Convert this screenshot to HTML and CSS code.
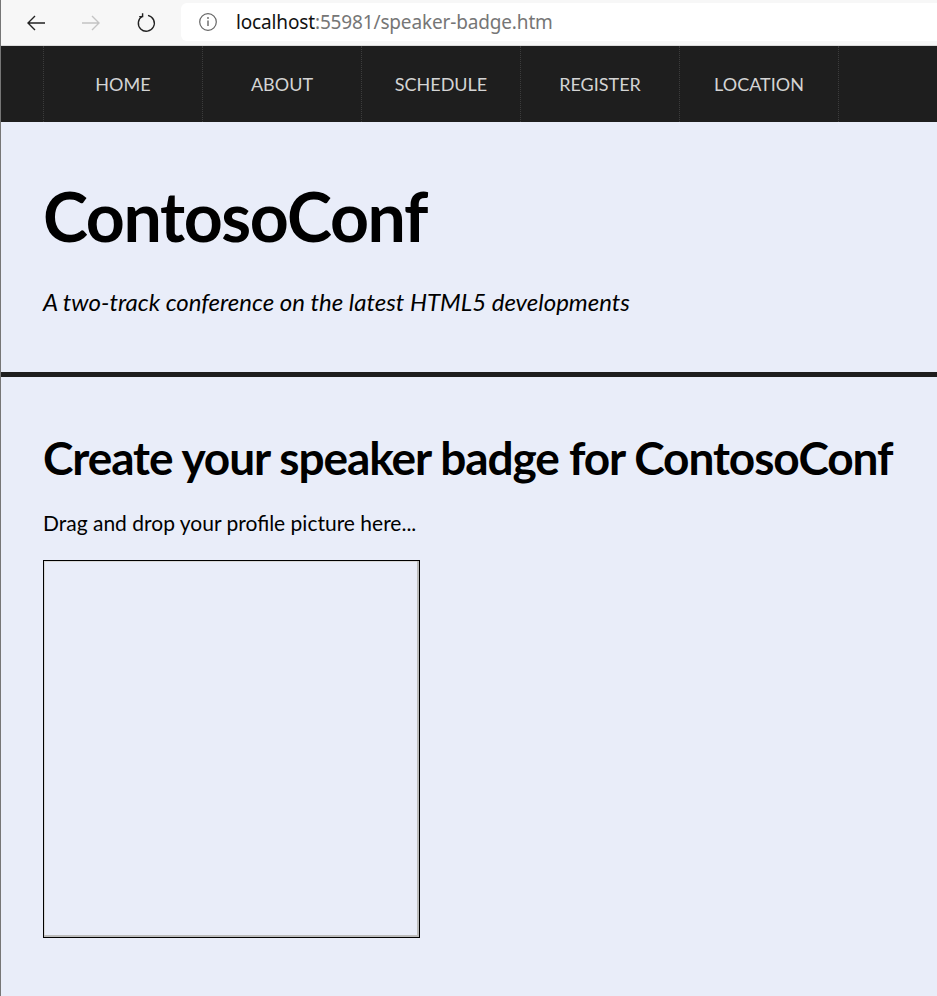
FILE: index.html
```html
<!DOCTYPE html>
<html lang="en">
<head>
<meta charset="utf-8">
<title>ContosoConf - Speaker Badge</title>
<link rel="stylesheet" href="styles.css">
</head>
<body>
<div class="window">
  <div class="chrome">
    <div class="chrome-btns">
      <span class="cbtn">
        <svg width="22" height="22" viewBox="0 0 22 22"><path d="M20 11H3M10 4l-7 7 7 7" fill="none" stroke="#222" stroke-width="1.4"/></svg>
      </span>
      <span class="cbtn">
        <svg width="22" height="22" viewBox="0 0 22 22"><path d="M2 11h17M12 4l7 7-7 7" fill="none" stroke="#c4c4c4" stroke-width="1.4"/></svg>
      </span>
      <span class="cbtn">
        <svg width="22" height="22" viewBox="0 0 22 22"><path d="M7.5 4.2A8 8 0 1 0 13 3.4" fill="none" stroke="#222" stroke-width="1.4"/><path d="M7.6 1.2v3.4H4.2" fill="none" stroke="#222" stroke-width="1.4"/></svg>
      </span>
    </div>
    <div class="address">
      <svg class="info" width="20" height="20" viewBox="0 0 20 20"><circle cx="10" cy="10" r="8.3" fill="none" stroke="#666" stroke-width="1.2"/><path d="M10 8.5v5.5" stroke="#666" stroke-width="1.4"/><circle cx="10" cy="6" r="0.9" fill="#666"/></svg>
      <span class="url"><span class="host">localhost</span>:55981/speaker-badge.htm</span>
    </div>
  </div>

  <nav class="topnav">
    <ul class="nav-list">
      <li class="nav-item"><a href="#">HOME</a></li>
      <li class="nav-item"><a href="#">ABOUT</a></li>
      <li class="nav-item"><a href="#">SCHEDULE</a></li>
      <li class="nav-item"><a href="#">REGISTER</a></li>
      <li class="nav-item"><a href="#">LOCATION</a></li>
    </ul>
  </nav>

  <header class="page-header">
    <h1 class="site-title">ContosoConf</h1>
    <p class="tagline">A two-track conference on the latest HTML5 developments</p>
  </header>

  <main class="content">
    <h2 class="section-title">Create your speaker badge for ContosoConf</h2>
    <p class="instructions">Drag and drop your profile picture here...</p>
    <div class="drop-zone"></div>
  </main>
</div>
</body>
</html>
```

FILE: styles.css
```css
html, body {
  margin: 0;
  padding: 0;
  height: 100%;
}

body {
  background: #e9edf9;
  font-family: Lato, "Open Sans", sans-serif;
  color: #000;
}

.window {
  min-height: 100%;
  border-left: 1px solid #767676;
  box-sizing: border-box;
  background: #e9edf9;
}

/* browser chrome */
.chrome {
  height: 46px;
  box-sizing: border-box;
  background: #f7f7f7;
  border-bottom: 1px solid #dcdcdc;
  display: flex;
  align-items: center;
}

.chrome-btns {
  display: flex;
  padding-left: 24px;
  gap: 33px;
  width: 156px;
  box-sizing: border-box;
}

.cbtn {
  width: 22px;
  height: 22px;
  display: flex;
}

.address {
  flex: 1;
  height: 38px;
  margin-top: -2px;
  background: #fff;
  border-radius: 6px 0 0 6px;
  display: flex;
  align-items: center;
  padding-left: 17px;
  margin-left: 24px;
}

.info {
  margin-right: 18px;
}

.url {
  font-family: "Noto Sans", "Open Sans", sans-serif;
  font-size: 19px;
  color: #767676;
  letter-spacing: -0.15px;
}

.host {
  color: #111;
}

/* nav */
.topnav {
  background: #1e1e1e;
  height: 76px;
}

.nav-list {
  list-style: none;
  margin: 0;
  padding: 0 0 0 42px;
  display: flex;
  height: 100%;
}

.nav-item {
  width: 159px;
  box-sizing: border-box;
  border-left: 1px dotted #3c3c3c;
  display: flex;
  align-items: center;
  justify-content: center;
}

.nav-item:last-child {
  width: 160px;
  border-right: 1px dotted #3c3c3c;
}

.nav-item a {
  color: #d4d4d4;
  text-decoration: none;
  font-size: 18px;
}

/* header */
.page-header {
  padding: 52px 42px 55px;
  border-bottom: 5px solid #1e1e1e;
}

.site-title {
  margin: 0;
  font-size: 68px;
  line-height: 84px;
  font-weight: 700;
  letter-spacing: -1.4px;
}

.tagline {
  margin: 29px 0 0;
  font-size: 24px;
  line-height: 30px;
  font-style: italic;
}

/* content */
.content {
  padding: 53px 42px 40px;
}

.section-title {
  margin: 0;
  font-size: 46px;
  line-height: 56px;
  font-weight: 700;
  letter-spacing: -1.08px;
  white-space: nowrap;
}

.instructions {
  margin: 23px 0 0;
  font-size: 21px;
  line-height: 28px;
}

.drop-zone {
  margin-top: 23px;
  width: 375px;
  height: 376px;
  border: 1px solid #000;
  box-shadow: inset -2px -2px 0 #bcbcbc, inset 1px 1px 0 #d8d8d8;
}
```
